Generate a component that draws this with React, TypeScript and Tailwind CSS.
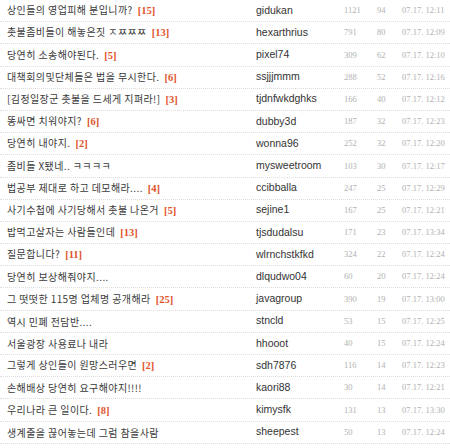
import React from 'react';

interface Post {
  title: string;
  replies?: number;
  user: string;
  views: number;
  votes: number;
  time: string;
}

const posts: Post[] = [
  { title: '상인들의 영업피해 분입니까?', replies: 15, user: 'gidukan', views: 1121, votes: 94, time: '12:11' },
  { title: '촛불좀비들이 해놓은짓 ㅈㅉㅉㅉ', replies: 13, user: 'hexarthrius', views: 791, votes: 80, time: '12:09' },
  { title: '당연히 소송해야된다.', replies: 5, user: 'pixel74', views: 309, votes: 62, time: '12:10' },
  { title: '대책회의및단체들은 법을 무시한다.', replies: 6, user: 'ssjjjmmm', views: 288, votes: 52, time: '12:16' },
  { title: '[김정일장군 촛불을 드세게 지펴라!]', replies: 3, user: 'tjdnfwkdghks', views: 166, votes: 40, time: '12:12' },
  { title: '똥싸면 치워야지?', replies: 6, user: 'dubby3d', views: 187, votes: 32, time: '12:23' },
  { title: '당연히 내야지.', replies: 2, user: 'wonna96', views: 252, votes: 32, time: '12:20' },
  { title: '좀비들 X됐네.. ㅋㅋㅋㅋ', user: 'mysweetroom', views: 103, votes: 30, time: '12:17' },
  { title: '법공부 제대로 하고 데모해라....', replies: 4, user: 'ccibballa', views: 247, votes: 25, time: '12:29' },
  { title: '사기수첩에 사기당해서 촛불 나온거', replies: 5, user: 'sejine1', views: 167, votes: 25, time: '12:21' },
  { title: '밥먹고살자는 사람들인데', replies: 13, user: 'tjsdudalsu', views: 171, votes: 23, time: '13:34' },
  { title: '질문합니다?', replies: 11, user: 'wlrnchstkfkd', views: 324, votes: 22, time: '12:24' },
  { title: '당연히 보상해줘야지....', user: 'dlqudwo04', views: 60, votes: 20, time: '12:24' },
  { title: '그 떳떳한 115명 업체명 공개해라', replies: 25, user: 'javagroup', views: 390, votes: 19, time: '13:00' },
  { title: '역시 민폐 전담반....', user: 'stncld', views: 53, votes: 15, time: '12:25' },
  { title: '서울광장 사용료나 내라', user: 'hhooot', views: 40, votes: 15, time: '12:24' },
  { title: '그렇게 상인들이 원망스러우면', replies: 2, user: 'sdh7876', views: 116, votes: 14, time: '12:23' },
  { title: '손해배상 당연히 요구해야지!!!!', user: 'kaori88', views: 30, votes: 14, time: '12:21' },
  { title: '우리나라 큰 일이다.', replies: 8, user: 'kimysfk', views: 131, votes: 13, time: '13:30' },
  { title: '생계줄을 끊어놓는데 그럼 참을사람', user: 'sheepest', views: 50, votes: 13, time: '12:24' },
];

export default function App() {
  return (
    <div className="w-[450px] h-[448px] bg-white overflow-hidden">
      {posts.map((p, i) => (
        <div
          key={i}
          className="flex items-center h-[22.2px] border-b border-dotted border-[#dcdcdc]"
        >
          {/* title */}
          <div
            className="w-[256px] pl-[7px] text-[10px] text-[#3a3a3a] whitespace-nowrap tracking-[0.4px]"
            style={{ fontFamily: '"Noto Sans CJK KR", sans-serif' }}
          >
            {p.title}
            {p.replies !== undefined && (
              <span className="ml-[5px] font-bold text-[#e0542a] font-['Liberation_Serif',serif] text-[10.5px] tracking-normal">
                [{p.replies}]
              </span>
            )}
          </div>
          {/* writer */}
          <div className="w-[88px] text-[10.5px] text-[#333] font-['Liberation_Sans',sans-serif]">{p.user}</div>
          {/* views / votes / date */}
          <div className="w-[33px] text-[8.5px] text-[#b0b0b0] font-['Liberation_Serif',serif]">{p.views}</div>
          <div className="w-[25px] text-[8.5px] text-[#b0b0b0] font-['Liberation_Serif',serif]">{p.votes}</div>
          <div className="text-[8.5px] text-[#b0b0b0] font-['Liberation_Serif',serif] whitespace-nowrap">
            07.17. {p.time}
          </div>
        </div>
      ))}
    </div>
  );
}
